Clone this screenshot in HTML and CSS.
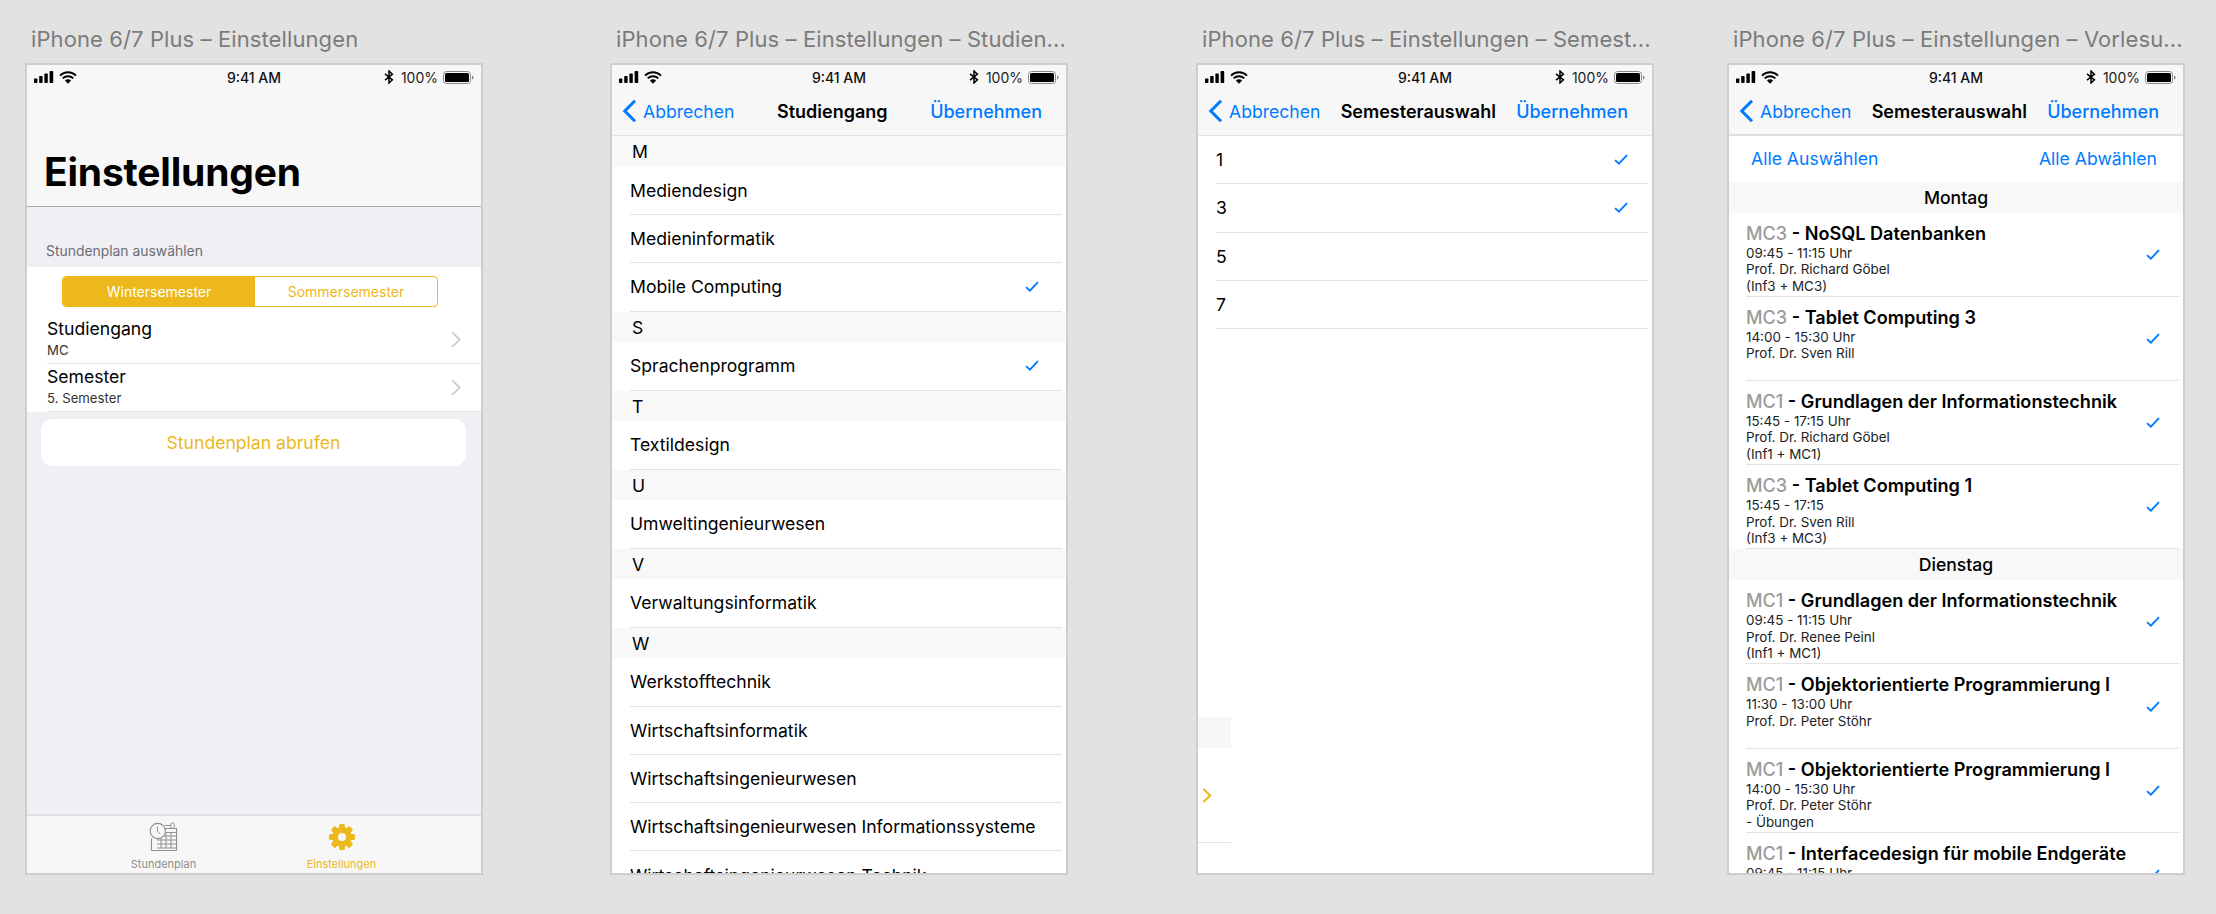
FILE: index.html
```html
<!DOCTYPE html>
<html lang="de">
<head>
  <meta charset="UTF-8">
  <title>iPhone 6/7 Plus – Einstellungen</title>
  <link rel="stylesheet" href="styles.css">
</head>
<body>
  <!-- shared icons -->
  <svg class="sprite">
    <symbol id="signal" viewBox="0 0 20 12">
      <rect x="0" y="7.5" width="3.4" height="4.5" rx="0.7"/>
      <rect x="5.2" y="5" width="3.4" height="7" rx="0.7"/>
      <rect x="10.4" y="2.5" width="3.4" height="9.5" rx="0.7"/>
      <rect x="15.6" y="0" width="3.6" height="12" rx="0.7"/>
    </symbol>
    <symbol id="wifi" viewBox="0 0 18 13">
      <path d="M1 4.6a11.5 11.5 0 0 1 16 0M3.7 7.4a7.6 7.6 0 0 1 10.6 0" fill="none" stroke="#000" stroke-width="2"/>
      <path d="M5.9 9.6a4.4 4.4 0 0 1 6.2 0L9 12.8z"/>
    </symbol>
    <symbol id="bluetooth" viewBox="0 0 10 14">
      <path d="M1 3.8l7.4 6.1L5 13V1l3.4 3.1L1 10.2" fill="none" stroke="#000" stroke-width="1.5"/>
    </symbol>
    <symbol id="battery" viewBox="0 0 31 13">
      <rect x="0.5" y="0.5" width="27" height="12" rx="3" fill="none" stroke="#8a8a8a"/>
      <rect x="2" y="2" width="24" height="9" rx="1.5"/>
      <path d="M29 4.5c1 .3 1.6 1 1.6 2s-.6 1.7-1.6 2z" fill="#8a8a8a"/>
    </symbol>
    <symbol id="back" viewBox="0 0 15 24">
      <path d="M13 1.8L2.8 12 13 22.2" fill="none" stroke="#007aff" stroke-width="3"/>
    </symbol>
    <symbol id="check" viewBox="0 0 15 12">
      <path d="M1 6.6l4.2 4L14 1.2" fill="none" stroke="#007aff" stroke-width="2"/>
    </symbol>
    <symbol id="chevron" viewBox="0 0 10 17">
      <path d="M1 1l7.6 7.5L1 16" fill="none" stroke="currentColor"/>
    </symbol>
  </svg>

  <main class="board">

    <section class="artboard artboard-first">
      <h2 class="board-title">iPhone 6/7 Plus – Einstellungen</h2>
      <div class="phone phone-settings">
        <header class="large-header">
          <div class="statusbar">
            <div class="status-left">
              <svg class="ic-signal"><use href="#signal"/></svg>
              <svg class="ic-wifi"><use href="#wifi"/></svg>
            </div>
            <div class="status-time">9:41 AM</div>
            <div class="status-right">
              <svg class="ic-bt"><use href="#bluetooth"/></svg>
              <span>100%</span>
              <svg class="ic-battery"><use href="#battery"/></svg>
            </div>
          </div>
          <h1>Einstellungen</h1>
        </header>

        <div class="group-label">Stundenplan auswählen</div>
        <div class="group">
          <div class="segmented">
            <div class="seg seg-on">Wintersemester</div>
            <div class="seg">Sommersemester</div>
          </div>
          <div class="detail-row">
            <div class="detail-text">
              <div class="detail-name">Studiengang</div>
              <div class="detail-sub">MC</div>
            </div>
            <svg class="ic-chevron"><use href="#chevron"/></svg>
          </div>
          <div class="detail-row">
            <div class="detail-text">
              <div class="detail-name">Semester</div>
              <div class="detail-sub">5. Semester</div>
            </div>
            <svg class="ic-chevron"><use href="#chevron"/></svg>
          </div>
        </div>
        <div class="fetch-btn">Stundenplan abrufen</div>

        <nav class="tabbar">
          <div class="tab">
            <svg class="tab-icon" viewBox="0 0 30 30" fill="none" stroke="#8f8f8f" stroke-width="1">
              <path d="M15 6.5h12.500v22h-25v-12" stroke-width="1.100"/>
              <path d="M16 3.500h6"/>
              <rect x="21.800" y="1" width="3.400" height="5.500" rx="1.700"/>
              <path d="M17 10.500h10M8 14h19M8 18h19M8 22h19M8 26h19M12 14v12M17 14v12M22 10.500v15.500M17 10.500v4"/>
              <circle cx="8.800" cy="9" r="7.600" fill="#f7f7f7" stroke-width="1.100"/>
              <path d="M8.500 4.500v4.800l2.600 2.600"/>
            </svg>
            <span>Stundenplan</span>
          </div>
          <div class="tab tab-on">
            <svg class="tab-icon" viewBox="0 0 30 30">
              <g fill="#ecb81c">
                <circle cx="15" cy="15" r="9.800"/>
                <rect x="12" y="2" width="6" height="26" rx="1.500"/>
                <rect x="12" y="2" width="6" height="26" rx="1.500" transform="rotate(45 15 15)"/>
                <rect x="12" y="2" width="6" height="26" rx="1.500" transform="rotate(90 15 15)"/>
                <rect x="12" y="2" width="6" height="26" rx="1.500" transform="rotate(135 15 15)"/>
              </g>
              <circle cx="15" cy="15" r="4" fill="#f7f7f7"/>
            </svg>
            <span>Einstellungen</span>
          </div>
        </nav>
      </div>
    </section>

    <section class="artboard artboard-second">
      <h2 class="board-title">iPhone 6/7 Plus – Einstellungen – Studien...</h2>
      <div class="phone phone-courses">
        <header class="topbar">
          <div class="statusbar">
            <div class="status-left">
              <svg class="ic-signal"><use href="#signal"/></svg>
              <svg class="ic-wifi"><use href="#wifi"/></svg>
            </div>
            <div class="status-time">9:41 AM</div>
            <div class="status-right">
              <svg class="ic-bt"><use href="#bluetooth"/></svg>
              <span>100%</span>
              <svg class="ic-battery"><use href="#battery"/></svg>
            </div>
          </div>
          <div class="navbar">
            <div class="nav-back"><svg class="ic-back"><use href="#back"/></svg>Abbrechen</div>
            <div class="nav-title">Studiengang</div>
            <div class="nav-apply">Übernehmen</div>
          </div>
        </header>
        <div class="letter">M</div>
        <div class="row">Mediendesign</div>
        <div class="row">Medieninformatik</div>
        <div class="row">Mobile Computing<svg class="ic-check"><use href="#check"/></svg></div>
        <div class="letter">S</div>
        <div class="row">Sprachenprogramm<svg class="ic-check"><use href="#check"/></svg></div>
        <div class="letter">T</div>
        <div class="row">Textildesign</div>
        <div class="letter">U</div>
        <div class="row">Umweltingenieurwesen</div>
        <div class="letter">V</div>
        <div class="row">Verwaltungsinformatik</div>
        <div class="letter">W</div>
        <div class="row">Werkstofftechnik</div>
        <div class="row">Wirtschaftsinformatik</div>
        <div class="row">Wirtschaftsingenieurwesen</div>
        <div class="row">Wirtschaftsingenieurwesen Informationssysteme</div>
        <div class="row">Wirtschaftsingenieurwesen Technik</div>
      </div>
    </section>

    <section class="artboard artboard-third">
      <h2 class="board-title">iPhone 6/7 Plus – Einstellungen – Semest...</h2>
      <div class="phone">
        <header class="topbar">
          <div class="statusbar">
            <div class="status-left">
              <svg class="ic-signal"><use href="#signal"/></svg>
              <svg class="ic-wifi"><use href="#wifi"/></svg>
            </div>
            <div class="status-time">9:41 AM</div>
            <div class="status-right">
              <svg class="ic-bt"><use href="#bluetooth"/></svg>
              <span>100%</span>
              <svg class="ic-battery"><use href="#battery"/></svg>
            </div>
          </div>
          <div class="navbar">
            <div class="nav-back"><svg class="ic-back"><use href="#back"/></svg>Abbrechen</div>
            <div class="nav-title">Semesterauswahl</div>
            <div class="nav-apply">Übernehmen</div>
          </div>
        </header>
        <div class="row">1<svg class="ic-check"><use href="#check"/></svg></div>
        <div class="row">3<svg class="ic-check"><use href="#check"/></svg></div>
        <div class="row">5</div>
        <div class="row">7</div>
        <!-- leftovers of a hidden list, they stick out at the left edge -->
        <div class="stub stub-bar"></div>
        <svg class="stub stub-chevron"><use href="#chevron"/></svg>
        <div class="stub stub-line"></div>
      </div>
    </section>

    <section class="artboard">
      <h2 class="board-title">iPhone 6/7 Plus – Einstellungen – Vorlesu...</h2>
      <div class="phone">
        <header class="topbar topbar-thick">
          <div class="statusbar">
            <div class="status-left">
              <svg class="ic-signal"><use href="#signal"/></svg>
              <svg class="ic-wifi"><use href="#wifi"/></svg>
            </div>
            <div class="status-time">9:41 AM</div>
            <div class="status-right">
              <svg class="ic-bt"><use href="#bluetooth"/></svg>
              <span>100%</span>
              <svg class="ic-battery"><use href="#battery"/></svg>
            </div>
          </div>
          <div class="navbar">
            <div class="nav-back"><svg class="ic-back"><use href="#back"/></svg>Abbrechen</div>
            <div class="nav-title">Semesterauswahl</div>
            <div class="nav-apply">Übernehmen</div>
          </div>
        </header>
        <div class="select-all">
          <span>Alle Auswählen</span>
          <span>Alle Abwählen</span>
        </div>
        <div class="day">Montag</div>
        <div class="lecture">
          <div class="lecture-text">
            <div class="lecture-name"><span class="course">MC3</span> - NoSQL Datenbanken</div>
            <div>09:45 - 11:15 Uhr</div>
            <div>Prof. Dr. Richard Göbel</div>
            <div>(Inf3 + MC3)</div>
          </div>
          <svg class="ic-check"><use href="#check"/></svg>
        </div>
        <div class="lecture">
          <div class="lecture-text">
            <div class="lecture-name"><span class="course">MC3</span> - Tablet Computing 3</div>
            <div>14:00 - 15:30 Uhr</div>
            <div>Prof. Dr. Sven Rill</div>
          </div>
          <svg class="ic-check"><use href="#check"/></svg>
        </div>
        <div class="lecture">
          <div class="lecture-text">
            <div class="lecture-name"><span class="course">MC1</span> - Grundlagen der Informationstechnik</div>
            <div>15:45 - 17:15 Uhr</div>
            <div>Prof. Dr. Richard Göbel</div>
            <div>(Inf1 + MC1)</div>
          </div>
          <svg class="ic-check"><use href="#check"/></svg>
        </div>
        <div class="lecture">
          <div class="lecture-text">
            <div class="lecture-name"><span class="course">MC3</span> - Tablet Computing 1</div>
            <div>15:45 - 17:15</div>
            <div>Prof. Dr. Sven Rill</div>
            <div>(Inf3 + MC3)</div>
          </div>
          <svg class="ic-check"><use href="#check"/></svg>
        </div>
        <div class="day">Dienstag</div>
        <div class="lecture">
          <div class="lecture-text">
            <div class="lecture-name"><span class="course">MC1</span> - Grundlagen der Informationstechnik</div>
            <div>09:45 - 11:15 Uhr</div>
            <div>Prof. Dr. Renee Peinl</div>
            <div>(Inf1 + MC1)</div>
          </div>
          <svg class="ic-check"><use href="#check"/></svg>
        </div>
        <div class="lecture">
          <div class="lecture-text">
            <div class="lecture-name"><span class="course">MC1</span> - Objektorientierte Programmierung I</div>
            <div>11:30 - 13:00 Uhr</div>
            <div>Prof. Dr. Peter Stöhr</div>
          </div>
          <svg class="ic-check"><use href="#check"/></svg>
        </div>
        <div class="lecture">
          <div class="lecture-text">
            <div class="lecture-name"><span class="course">MC1</span> - Objektorientierte Programmierung I</div>
            <div>14:00 - 15:30 Uhr</div>
            <div>Prof. Dr. Peter Stöhr</div>
            <div>- Übungen</div>
          </div>
          <svg class="ic-check"><use href="#check"/></svg>
        </div>
        <div class="lecture">
          <div class="lecture-text">
            <div class="lecture-name"><span class="course">MC1</span> - Interfacedesign für mobile Endgeräte</div>
            <div>09:45 - 11:15 Uhr</div>
          </div>
          <svg class="ic-check"><use href="#check"/></svg>
        </div>
      </div>
    </section>

  </main>
</body>
</html>
```

FILE: styles.css
```css
* {
  box-sizing: border-box;
}
body {
  margin: 0;
  height: 914px;
  overflow: hidden;
  background-color: #e2e2e2;
  color: #000;
  font-family: Inter, "Noto Sans", sans-serif;
}
.sprite {
  display: none;
}
.board {
  display: flex;
  padding-left: 25px;
}
.artboard {
  width: 458px;
  flex: none;
}
.artboard-first {
  margin-right: 127px;
}
.artboard-second {
  margin-right: 128px;
}
.artboard-third {
  margin-right: 73px;
}
.board-title {
  margin: 0;
  height: 63px;
  padding: 26px 0 0 6px;
  font-size: 22px;
  line-height: 26px;
  font-weight: 400;
  letter-spacing: 0.1px;
  color: #7b7b7b;
  white-space: nowrap;
}

/* phone frame */
.phone {
  position: relative;
  display: flex;
  flex-direction: column;
  height: 812px;
  border: 2px solid #cecece;
  background-color: #fff;
  overflow: hidden;
}
.phone-settings {
  background-color: #efeff4;
}

/* status bar */
.statusbar {
  display: grid;
  grid-template-columns: 1fr auto 1fr;
  align-items: center;
  height: 24px;
  padding: 0 7px;
  font-size: 14px;
}
.status-left {
  display: flex;
  align-items: center;
  gap: 5px;
}
.status-right {
  display: flex;
  align-items: center;
  justify-content: flex-end;
  color: #222;
}
.ic-signal {
  width: 20px;
  height: 12px;
}
.ic-wifi {
  width: 18px;
  height: 13px;
}
.ic-bt {
  width: 10px;
  height: 14px;
  margin-right: 7px;
}
.ic-battery {
  width: 31px;
  height: 13px;
  margin-left: 5px;
}
.status-time {
  font-weight: 500;
  color: #111;
}

/* top bars */
.topbar {
  flex: none;
  height: 71px;
  background-color: #f7f7f7;
  border-bottom: 1px solid #e3e3e3;
}
.topbar-thick {
  border-bottom: 2px solid #dedede;
}
.navbar {
  display: flex;
  justify-content: space-between;
  align-items: center;
  height: 44px;
  padding: 0 24px 0 10px;
  font-size: 18px;
}
.nav-back {
  display: flex;
  align-items: center;
  gap: 6px;
  font-size: 17.6px;
  color: #007aff;
}
.ic-back {
  width: 15px;
  height: 24px;
}
.nav-title {
  font-weight: 600;
}
.nav-apply {
  font-weight: 500;
  color: #007aff;
}

/* first phone */
.large-header {
  flex: none;
  height: 142px;
  background-color: #f7f7f7;
  border-bottom: 1px solid #a9a9ad;
}
.large-header h1 {
  margin: 0;
  padding: 60px 0 0 17px;
  font-size: 39px;
  line-height: 46px;
  font-weight: 700;
  letter-spacing: -0.2px;
}
.group-label {
  flex: none;
  height: 60px;
  padding: 34px 0 0 19px;
  font-size: 13.9px;
  line-height: 20px;
  color: #6d6d72;
}
.group {
  flex: none;
  background-color: #fff;
}
.segmented {
  display: flex;
  margin: 9px 43px 9px 35px;
  height: 31px;
  border: 1px solid #ecb81c;
  border-radius: 4px;
  overflow: hidden;
  font-size: 14px;
  color: #ecb81c;
}
.seg {
  flex: 1;
  display: flex;
  align-items: center;
  justify-content: center;
}
.seg-on {
  flex: none;
  width: 192px;
  background-color: #ecb81c;
  color: #fff;
}
.detail-row {
  display: flex;
  align-items: center;
  justify-content: space-between;
  height: 48px;
  margin-left: 20px;
  padding-right: 20px;
  border-bottom: 1px solid #e3e3e3;
}
.detail-name {
  font-size: 17.6px;
  line-height: 22px;
}
.detail-sub {
  font-size: 13.2px;
  line-height: 21px;
  color: #333;
}
.ic-chevron {
  width: 10px;
  height: 17px;
  color: #c7c7cc;
  stroke-width: 1.7;
}
.fetch-btn {
  flex: none;
  display: flex;
  align-items: center;
  justify-content: center;
  height: 47px;
  margin: 7px 15px 0 14px;
  border-radius: 12px;
  background-color: #fff;
  font-size: 17.6px;
  color: #ecb81c;
}
.tabbar {
  display: flex;
  justify-content: center;
  margin-top: auto;
  padding-right: 3px;
  height: 59px;
  border-top: 2px solid #e0e0e0;
  background-color: #f7f7f7;
}
.tab {
  display: flex;
  flex-direction: column;
  align-items: center;
  width: 178px;
  padding-top: 6px;
  font-size: 11px;
  line-height: 14px;
  color: #8f8f8f;
}
.tab-on {
  color: #ecb81c;
}
.tab-icon {
  width: 30px;
  height: 30px;
  margin-bottom: 5px;
}

/* lists */
.letter {
  flex: none;
  height: 30.7px;
  padding-left: 20px;
  background-color: #f8f8f8;
  font-size: 17.6px;
  line-height: 31px;
}
.row {
  flex: none;
  display: flex;
  align-items: center;
  justify-content: space-between;
  height: 48.3px;
  margin-left: 18px;
  margin-right: 4px;
  padding-right: 20px;
  border-bottom: 1px solid #e3e3e3;
  font-size: 17.6px;
  white-space: nowrap;
}
.phone-courses .row {
  padding-right: 23px;
}
.ic-check {
  flex: none;
  width: 14px;
  height: 11px;
}
.stub {
  position: absolute;
  left: 0;
}
.stub-bar {
  top: 652px;
  width: 33px;
  height: 31px;
  background-color: #f7f7f7;
}
.stub-chevron {
  top: 723px;
  left: 4px;
  width: 10px;
  height: 15px;
  color: #ecb81c;
  stroke-width: 2.4;
}
.stub-line {
  top: 777px;
  width: 33px;
  height: 1px;
  background-color: #e3e3e3;
}

/* lecture list */
.select-all {
  flex: none;
  display: flex;
  justify-content: space-between;
  align-items: center;
  height: 45.5px;
  padding: 0 26px 0 22px;
  font-size: 17.6px;
  color: #007aff;
}
.day {
  flex: none;
  height: 31px;
  background-color: #f8f8f8;
  font-size: 17.6px;
  font-weight: 500;
  line-height: 31px;
  text-align: center;
}
.lecture {
  flex: none;
  display: flex;
  align-items: center;
  justify-content: space-between;
  height: 84.2px;
  margin-left: 17px;
  margin-right: 4px;
  padding: 0 19px 0 0;
  border-bottom: 1px solid #e3e3e3;
}
.lecture-text {
  align-self: flex-start;
  padding-top: 10px;
  font-size: 13.4px;
  line-height: 16.5px;
  color: #222;
  white-space: nowrap;
}
.lecture-name {
  margin-bottom: 1px;
  font-size: 18.1px;
  line-height: 21px;
  font-weight: 600;
  color: #000;
}
.course {
  color: #9b9b9b;
  font-weight: 500;
}
```
